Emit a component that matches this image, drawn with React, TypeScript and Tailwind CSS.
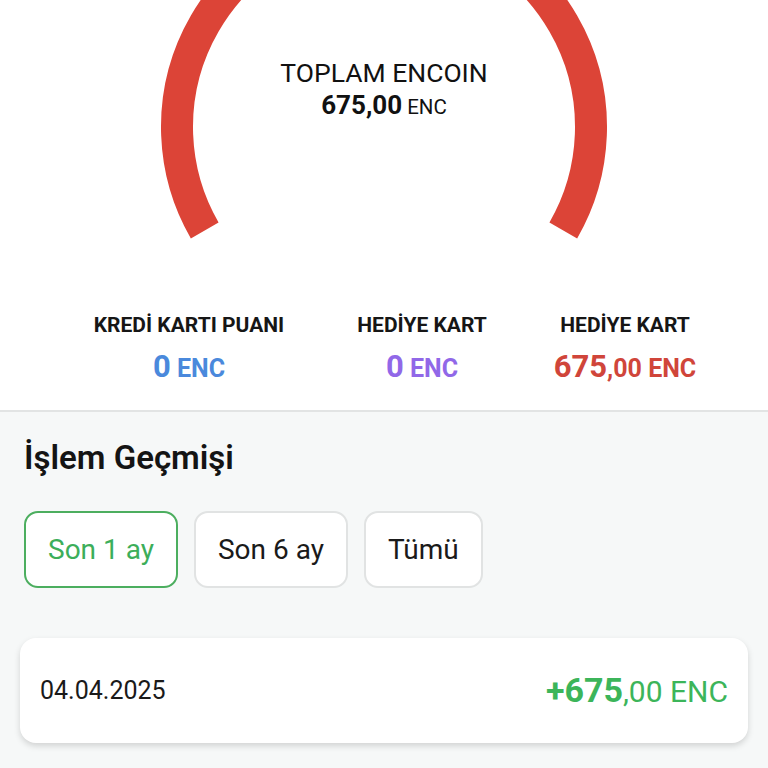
import React from 'react';

const font = { fontFamily: 'Roboto, "Noto Sans", sans-serif' };

const Gauge = () => (
  <div className="relative h-[290px]">
    <svg className="absolute inset-0" width="768" height="290" viewBox="0 0 768 290">
      <path
        d="M 204.7 230.5 A 207 207 0 1 1 563.3 230.5"
        fill="none"
        stroke="#dc4437"
        strokeWidth="32"
      />
    </svg>
    <div className="relative flex flex-col items-center pt-[57px] text-[#111]">
      <div className="text-[26.5px] leading-[32px]">TOPLAM ENCOIN</div>
      <div className="leading-[32px]">
        <span className="text-[26px] font-bold">675,00</span>
        <span className="text-[20.5px]"> ENC</span>
      </div>
    </div>
  </div>
);

const Stat = ({ label, className, children }: { label: string; className: string; children: React.ReactNode }) => (
  <div className={'flex flex-col items-center ' + className}>
    <div className="text-[21px] font-bold leading-[22px] text-[#161616]">{label}</div>
    <div className="mt-[13px] leading-[36px] font-bold">{children}</div>
  </div>
);

const filters = ['Son 1 ay', 'Son 6 ay', 'Tümü'];

export default function App() {
  return (
    <div className="min-h-[768px] bg-[#f6f8f8]" style={font}>
      <div className="bg-white border-b-2 border-[#e2e4e4] pb-[20px]">
        <Gauge />
        <div className="flex mt-[24px]">
          <Stat label="KREDİ KARTI PUANI" className="w-[200px] ml-[89px]">
            <span className="text-[#4a89dc]">
              <span className="text-[31px]">0</span>
              <span className="text-[25px]"> ENC</span>
            </span>
          </Stat>
          <Stat label="HEDİYE KART" className="w-[180px] ml-[43px]">
            <span className="text-[#9168e8]">
              <span className="text-[31px]">0</span>
              <span className="text-[25px]"> ENC</span>
            </span>
          </Stat>
          <Stat label="HEDİYE KART" className="w-[180px] ml-[23px]">
            <span className="text-[#d0453a]">
              <span className="text-[31px]">675</span>
              <span className="text-[25px]">,00 ENC</span>
            </span>
          </Stat>
        </div>
      </div>

      <div className="px-[24px] pt-[28px]">
        <h2 className="text-[33px] font-semibold leading-[36px] text-[#141414]">İşlem Geçmişi</h2>
        <div className="flex gap-[16px] mt-[35px]">
          {filters.map((f, i) => (
            <button
              key={f}
              className={
                i === 0
                  ? 'h-[77px] px-[22px] rounded-[14px] border-2 border-[#4cae5f] bg-white text-[28px] text-[#3cae5a]'
                  : 'h-[77px] px-[22px] rounded-[14px] border-2 border-[#e1e3e3] bg-white text-[28px] text-[#1a1a1a]'
              }
            >
              {f}
            </button>
          ))}
        </div>
      </div>

      <div className="px-[20px] pt-[50px]">
        <div className="h-[105px] bg-white rounded-[16px] shadow-[0_3px_6px_rgba(0,0,0,0.15)] flex items-center justify-between px-[20px]">
          <span className="text-[25px] text-[#1a1a1a]">04.04.2025</span>
          <span className="text-[#3cb55a]">
            <span className="text-[34px] font-bold">+675</span>
            <span className="text-[30px]">,00 ENC</span>
          </span>
        </div>
      </div>
    </div>
  );
}
